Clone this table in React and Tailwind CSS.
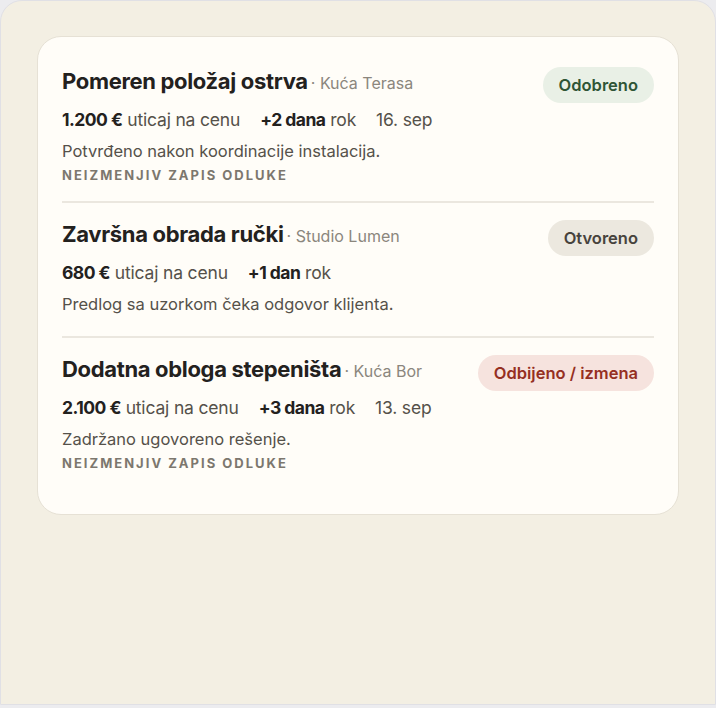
const items = [
  {
    title: 'Pomeren položaj ostrva',
    place: 'Kuća Terasa',
    status: 'Odobreno',
    tone: 'green',
    price: '1.200 €',
    days: '+2 dana',
    date: '16. sep',
    note: 'Potvrđeno nakon koordinacije instalacija.',
    locked: true,
  },
  {
    title: 'Završna obrada ručki',
    place: 'Studio Lumen',
    status: 'Otvoreno',
    tone: 'gray',
    price: '680 €',
    days: '+1 dan',
    note: 'Predlog sa uzorkom čeka odgovor klijenta.',
  },
  {
    title: 'Dodatna obloga stepeništa',
    place: 'Kuća Bor',
    status: 'Odbijeno / izmena',
    tone: 'red',
    price: '2.100 €',
    days: '+3 dana',
    date: '13. sep',
    note: 'Zadržano ugovoreno rešenje.',
    locked: true,
  },
]

const badgeTones = {
  green: 'bg-[#e9f0e6] text-[#2f5536]',
  gray: 'bg-[#ece8df] text-[#47433d]',
  red: 'bg-[#f6e3de] text-[#952f22]',
}

function Row({ item, last }) {
  const pad = item.locked ? 'pt-[17px] pb-[17px]' : 'pt-[17px] pb-[20px]'
  return (
    <div className={'flex items-start justify-between gap-4 ' + pad + (last ? '' : ' border-b-2 border-[#ebe7df]')}>
      <div className="min-w-0">
        <div className="flex items-baseline gap-[3px]">
          <h3 className="text-[22px] leading-[28px] font-bold tracking-[-0.015em] text-[#23211e]">{item.title}</h3>
          <span className="text-[16px] text-[#8b867d]">· {item.place}</span>
        </div>
        <div className="mt-[12px] flex items-baseline gap-5 text-[17.5px] leading-[26px] text-[#55514a] tracking-[-0.01em]">
          <span>
            <b className="font-bold text-[#23211e] tracking-[-0.03em]">{item.price}</b> uticaj na cenu
          </span>
          <span>
            <b className="font-bold text-[#23211e] tracking-[-0.03em]">{item.days}</b> rok
          </span>
          {item.date && <span>{item.date}</span>}
        </div>
        <p className="mt-[6px] text-[16.5px] leading-[24px] text-[#55514a]">{item.note}</p>
        {item.locked && (
          <p className="mt-[3px] text-[13px] leading-[18px] font-bold tracking-[0.155em] text-[#7c776e]">NEIZMENJIV ZAPIS ODLUKE</p>
        )}
      </div>
      <span className={'shrink-0 rounded-full px-4 h-9 flex items-center text-[16.5px] font-semibold ' + badgeTones[item.tone]}>
        {item.status}
      </span>
    </div>
  )
}

export default function App() {
  return (
    <div className="min-h-screen bg-[#ececef]" style={{ fontFamily: 'Inter, "Noto Sans", sans-serif' }}>
      <div className="h-[705px] rounded-t-[22px] border border-[#e0e0e5] bg-[#f3efe3] px-9 pt-[35px]">
        <div className="rounded-[24px] border border-[#e6e1d5] bg-[#fffdf8] px-6 pt-[13px] pb-[25px]">
          {items.map((item, i) => (
            <Row key={item.title} item={item} last={i === items.length - 1} />
          ))}
        </div>
      </div>
    </div>
  )
}
